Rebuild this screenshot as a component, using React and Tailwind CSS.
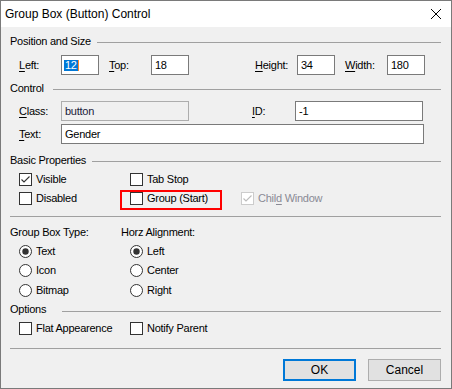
import React from 'react';

const Header = ({ label, lineWidth, lineTop = 'mt-[2px]', className = '' }) => (
    <div className={`flex items-center justify-between h-[14px] ${className}`}>
        <span>{label}</span>
        <div className={`h-px bg-[#a0a0a0] ${lineTop}`} style={{ width: lineWidth }} />
    </div>
);

const Edit = ({ value, width, disabled, children }) => (
    <div
        className={`h-[20px] border flex items-center pl-[3px] ${disabled ? 'bg-[#f0f0f0] border-[#adadad] text-[#1a1a3a]' : 'bg-white border-[#7a7a7a]'}`}
        style={{ width }}
    >
        {children || value}
    </div>
);

const Label = ({ width, k, rest }) => (
    <span className="shrink-0" style={{ width }}>
        <u className="underline-offset-2">{k}</u>
        {rest}
    </span>
);

const Check = ({ label, checked, disabled }) => (
    <div className={`flex items-center gap-[4px] h-[13px] ${disabled ? 'text-[#8a8a95]' : ''}`}>
        <div className={`w-[13px] h-[13px] border bg-white ${disabled ? 'border-[#cccccc]' : 'border-[#333333]'}`}>
            {checked && (
                <svg width="11" height="11" viewBox="0 0 11 11">
                    <polyline points="1.5,5.5 4,8 9.5,2.5" fill="none" stroke={disabled ? '#bcbcbc' : '#333333'} strokeWidth="1.1" />
                </svg>
            )}
        </div>
        <span>{label}</span>
    </div>
);

const Radio = ({ label, checked }) => (
    <div className="flex items-center gap-[4px] h-[13px]">
        <svg width="13" height="13" viewBox="0 0 13 13">
            <circle cx="6.5" cy="6.5" r="6" fill="white" stroke="#333333" strokeWidth="1" />
            {checked && <circle cx="6.5" cy="6.5" r="3.2" fill="#333333" />}
        </svg>
        <span>{label}</span>
    </div>
);

const App = () => {
    return (
        <div className="w-[452px] h-[389px] border border-[#7a7a7a] bg-[#f0f0f0] font-['Liberation_Sans',Arial,sans-serif] text-black flex flex-col">
            {/* title bar */}
            <div className="h-[26px] bg-white flex items-center justify-between pl-[4px] pr-[9px] text-[12px] shrink-0">
                <span>Group Box (Button) Control</span>
                <svg width="12" height="12" viewBox="0 0 12 12">
                    <path d="M1 1 L11 11 M11 1 L1 11" stroke="#000" strokeWidth="1" />
                </svg>
            </div>

            <div className="pl-[9px] pr-[10px] text-[11px] tracking-[-0.25px] flex flex-col">
                <Header label="Position and Size" lineWidth={344} className="mt-[7px]" />
                <div className="flex items-center mt-[7px] pl-[9px]">
                    <Label width={42} k="L" rest="eft:" />
                    <Edit width={38}>
                        <span className="bg-[#0078d7] text-white h-[11px] leading-[11px] -ml-[1px] px-[1px]">12</span>
                        <span className="w-px h-[11px] bg-[#ff8728]" />
                    </Edit>
                    <div className="w-[10px]" />
                    <Label width={42} k="T" rest="op:" />
                    <Edit width={38} value="18" />
                    <div className="w-[66px]" />
                    <Label width={42} k="H" rest="eight:" />
                    <Edit width={38} value="34" />
                    <div className="w-[10px]" />
                    <Label width={42} k="W" rest="idth:" />
                    <Edit width={38} value="180" />
                </div>

                <Header label="Control" lineWidth={388} className="mt-[6px]" />
                <div className="flex items-center mt-[6px] pl-[9px]">
                    <Label width={42} k="C" rest="lass:" />
                    <Edit width={128} value="button" disabled />
                    <div className="w-[63px]" />
                    <Label width={43} k="I" rest="D:" />
                    <Edit width={128} value="-1" />
                </div>
                <div className="flex items-center mt-[3px] pl-[9px]">
                    <Label width={42} k="T" rest="ext:" />
                    <Edit width={363} value="Gender" />
                </div>

                <Header label="Basic Properties" lineWidth={349} className="mt-[9px]" />
                <div className="grid grid-cols-[111px_111px_1fr] pl-[9px] mt-[6px] gap-y-[6px]">
                    <Check label="Visible" checked />
                    <Check label="Tab Stop" />
                    <div />
                    <Check label="Disabled" />
                    <div className="relative">
                        <Check label="Group (Start)" />
                        <div className="absolute left-[-10px] top-[-2px] w-[102px] h-[20px] border-2 border-[#ff0000]" />
                    </div>
                    <Check
                        label={
                            <>
                                Chil<u className="underline-offset-2">d</u> Window
                            </>
                        }
                        checked
                        disabled
                    />
                </div>

                <div className="h-px bg-[#a0a0a0] mt-[11px]" />

                <div className="grid grid-cols-[111px_1fr] mt-[8px]">
                    <div className="flex flex-col">
                        <div className="h-[14px] flex items-center">Group Box Type:</div>
                        <div className="pl-[9px] flex flex-col">
                            <div className="mt-[6px]"><Radio label="Text" checked /></div>
                            <div className="mt-[6px]"><Radio label="Icon" /></div>
                            <div className="mt-[7px]"><Radio label="Bitmap" /></div>
                        </div>
                    </div>
                    <div className="flex flex-col">
                        <div className="h-[14px] flex items-center">Horz Alignment:</div>
                        <div className="pl-[9px] flex flex-col">
                            <div className="mt-[6px]"><Radio label="Left" checked /></div>
                            <div className="mt-[6px]"><Radio label="Center" /></div>
                            <div className="mt-[7px]"><Radio label="Right" /></div>
                        </div>
                    </div>
                </div>

                <Header label="Options" lineWidth={379} lineTop="mt-[5px]" className="mt-[5px]" />
                <div className="grid grid-cols-[111px_1fr] pl-[9px] mt-[6px]">
                    <Check label="Flat Appearence" />
                    <Check label="Notify Parent" />
                </div>

                <div className="h-px bg-[#a0a0a0] mt-[13px]" />

                <div className="flex justify-end gap-[12px] mt-[10px]">
                    <button className="w-[73px] h-[22px] bg-[#e1e1e1] border-2 border-[#0078d7] text-[12px] tracking-normal">OK</button>
                    <button className="w-[73px] h-[22px] bg-[#e1e1e1] border border-[#adadad] text-[12px] tracking-normal">Cancel</button>
                </div>
            </div>
        </div>
    );
};

export default App;
